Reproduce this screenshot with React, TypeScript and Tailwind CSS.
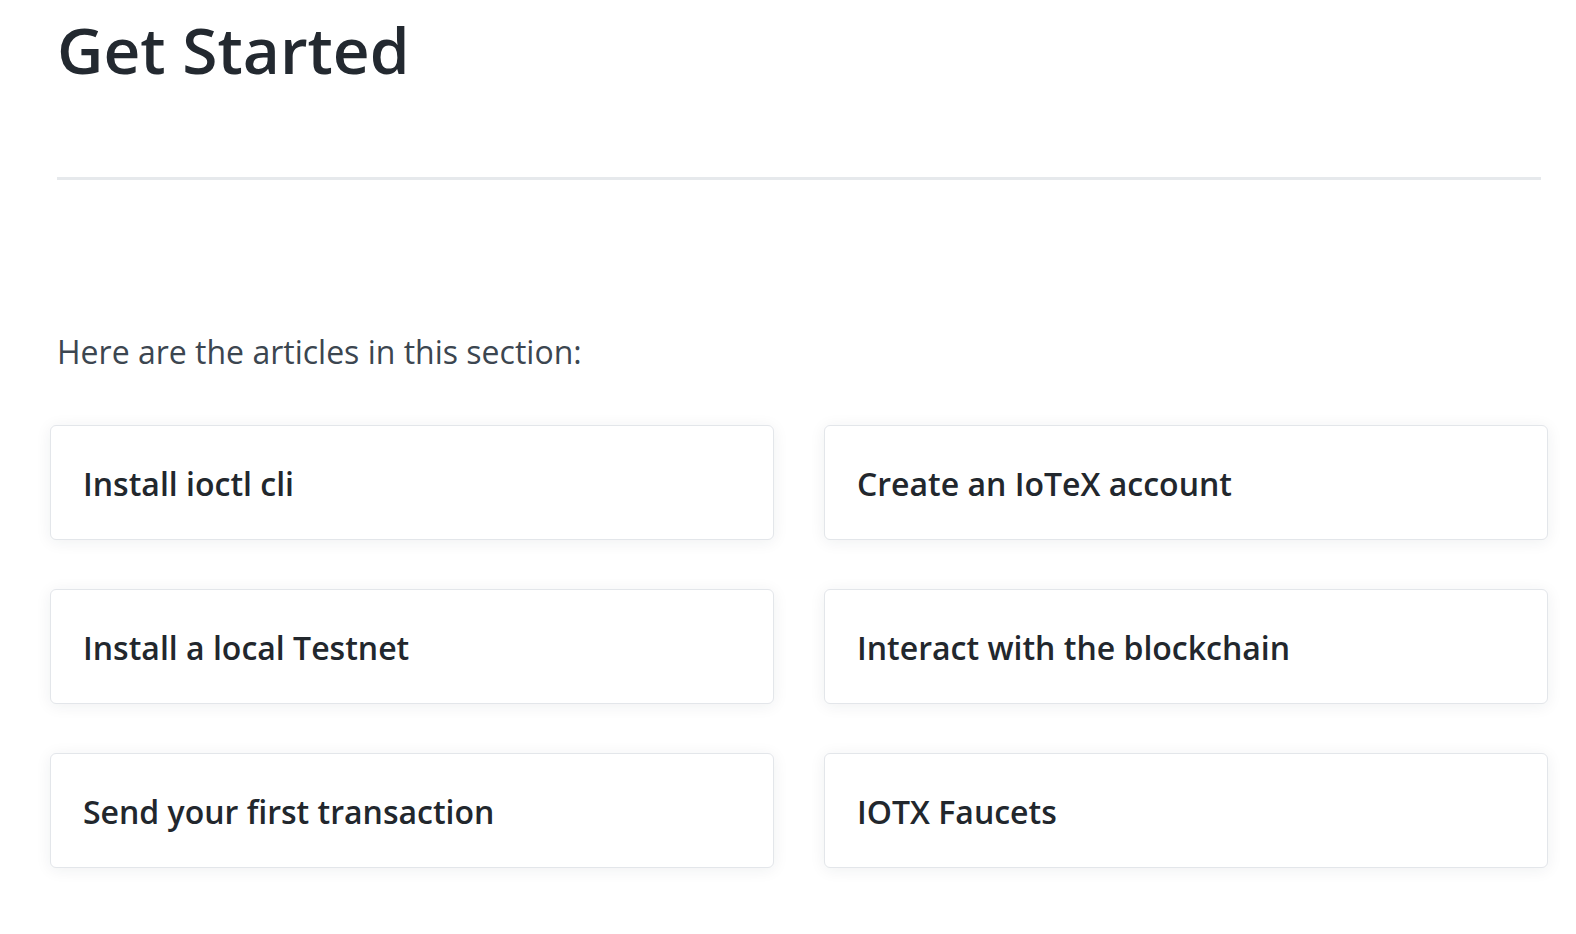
const articles = [
  "Install ioctl cli",
  "Create an IoTeX account",
  "Install a local Testnet",
  "Interact with the blockchain",
  "Send your first transaction",
  "IOTX Faucets",
];

export default function App() {
  return (
    <div
      className="min-h-[934px] w-full bg-white pl-[57px] pr-[35px]"
      style={{ fontFamily: '"Open Sans", "Noto Sans", sans-serif' }}
    >
      <div className="w-[1484px]">
        {/* Title */}
        <h1 className="pt-[18px] text-[64px] leading-[64px] font-semibold text-[#232930]">
          Get Started
        </h1>
        <div className="mt-[95px] h-[3px] w-full bg-[#e6e9ec]" />

        {/* Intro */}
        <p className="mt-[156px] text-[32px] leading-[32px] text-[#3c4650]">
          Here are the articles in this section:
        </p>

        {/* Article cards */}
        <div className="mx-[-7px] mt-[57px] grid grid-cols-2 gap-x-[50px] gap-y-[49px]">
          {articles.map((title) => (
            <a
              key={title}
              href="#"
              className="flex h-[115px] items-center rounded-[6px] border border-[#e3e6ea] bg-white pl-[32px] pr-[34px] pt-[3px] shadow-[0_2px_16px_rgba(30,40,60,0.07)]"
            >
              <span className="text-[32px] leading-[32px] font-semibold text-[#22272d]">
                {title}
              </span>
            </a>
          ))}
        </div>
      </div>
    </div>
  );
}
